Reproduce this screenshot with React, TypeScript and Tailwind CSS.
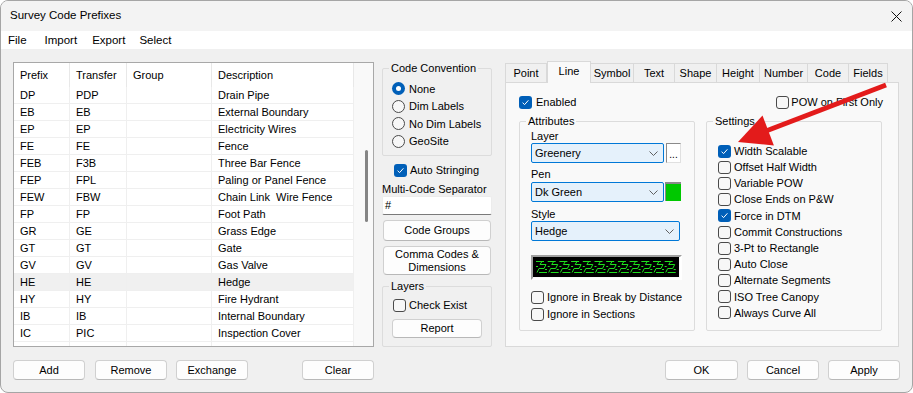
import React from "react";

type P = { children?: React.ReactNode; className?: string };

function Check({ checked }: { checked?: boolean }) {
  return checked ? (
    <span className="w-[13px] h-[13px] rounded-[3px] bg-[#005fb8] flex items-center justify-center shrink-0">
      <svg width="9" height="9" viewBox="0 0 9 9">
        <path d="M1.6 4.7 L3.6 6.6 L7.4 2.3" stroke="#ffffff" strokeWidth="1" fill="none" />
      </svg>
    </span>
  ) : (
    <span className="w-[13px] h-[13px] rounded-[3px] border border-[#4a4a4a] bg-[#f7f7f7] shrink-0" />
  );
}

function Radio({ checked }: { checked?: boolean }) {
  return checked ? (
    <span className="w-[13px] h-[13px] rounded-full bg-[#005fb8] flex items-center justify-center shrink-0">
      <span className="w-[5px] h-[5px] rounded-full bg-white" />
    </span>
  ) : (
    <span className="w-[13px] h-[13px] rounded-full border border-[#4a4a4a] bg-[#f7f7f7] shrink-0" />
  );
}

function Btn({ children, className = "" }: P) {
  return (
    <div
      className={`flex items-center justify-center bg-[#fdfdfd] border border-[#d0d0d0] border-b-[#b8b8b8] rounded-[4px] text-[11px] text-black leading-[13px] text-center ${className}`}
    >
      {children}
    </div>
  );
}

function Group({ label, className = "", bg, children }: P & { label: string; bg: string }) {
  return (
    <div className={`relative border border-[#dcdcdc] rounded-[2px] ${className}`}>
      <span className={`absolute -top-[8px] left-[6px] px-[2px] leading-[14px] text-[11px] ${bg}`}>{label}</span>
      {children}
    </div>
  );
}

function Select({ value, className = "" }: { value: string; className?: string }) {
  return (
    <div
      className={`h-[20px] flex items-center justify-between bg-[#e5f1fb] border border-[#0078d7] rounded-[2px] pl-[3px] pr-[5px] ${className}`}
    >
      <span className="text-[11px]">{value}</span>
      <svg width="9" height="5" viewBox="0 0 9 5">
        <path d="M0.5 0.5 L4.5 4.5 L8.5 0.5" stroke="#606060" strokeWidth="1" fill="none" />
      </svg>
    </div>
  );
}

const rows: [string, string, string][] = [
  ["DP", "PDP", "Drain Pipe"],
  ["EB", "EB", "External Boundary"],
  ["EP", "EP", "Electricity Wires"],
  ["FE", "FE", "Fence"],
  ["FEB", "F3B", "Three Bar Fence"],
  ["FEP", "FPL", "Paling or Panel Fence"],
  ["FEW", "FBW", "Chain Link\u00a0 Wire Fence"],
  ["FP", "FP", "Foot Path"],
  ["GR", "GE", "Grass Edge"],
  ["GT", "GT", "Gate"],
  ["GV", "GV", "Gas Valve"],
  ["HE", "HE", "Hedge"],
  ["HY", "HY", "Fire Hydrant"],
  ["IB", "IB", "Internal Boundary"],
  ["IC", "PIC", "Inspection Cover"],
  ["KB", "KB", "Kerb (TC) Channel"],
];

const tabs: [string, number][] = [
  ["Point", 42],
  ["Line", 44],
  ["Symbol", 44],
  ["Text", 42],
  ["Shape", 43],
  ["Height", 44],
  ["Number", 49],
  ["Code", 42],
  ["Fields", 40],
];

const settings: [string, boolean][] = [
  ["Width Scalable", true],
  ["Offset Half Width", false],
  ["Variable POW", false],
  ["Close Ends on P&W", false],
  ["Force in DTM", true],
  ["Commit Constructions", false],
  ["3-Pt to Rectangle", false],
  ["Auto Close", false],
  ["Alternate Segments", false],
  ["ISO Tree Canopy", false],
  ["Always Curve All", false],
];

function Hedge() {
  const units = [];
  for (let i = 0; i < 12; i++) {
    const x = 3 + i * 11.7;
    units.push(
      <g key={i} transform={`translate(${x},0)`}>
        <path d="M0 4.5 H8 M3 15.5 H11" />
        <path d="M1 15.5 L3 11.5 H8 L10 7.5 H4 L6 4.5" />
        <path d="M0 9.5 H2 M9 12.5 H11" />
      </g>
    );
  }
  return (
    <svg width="146" height="20" viewBox="0 0 146 20">
      <rect width="146" height="20" fill="#000" />
      <g stroke="#1ee01e" strokeWidth="1" fill="none">{units}</g>
    </svg>
  );
}

export default function App() {
  return (
    <div className="w-[913px] h-[393px] relative overflow-hidden bg-[#f0f0f0] border border-[#a5a5a5] rounded-[8px] font-['Liberation_Sans',Arial,sans-serif] text-black text-[11px] flex flex-col">
      {/* Title bar */}
      <div className="h-[30px] shrink-0 bg-[#f3f3f3] flex items-center pl-[9px] pr-[10px]">
        <span className="text-[11.5px]">Survey Code Prefixes</span>
        <div className="ml-auto flex items-center">
          <svg width="11" height="11" viewBox="0 0 11 11">
            <path d="M0.5 0.5 L10.5 10.5 M10.5 0.5 L0.5 10.5" stroke="#111" strokeWidth="1" />
          </svg>
        </div>
      </div>
      {/* Menu */}
      <div className="h-[18px] shrink-0 bg-white flex items-center pl-[7px] pt-[1px] text-[11.5px]">
        <span>File</span>
        <span className="ml-[18px]">Import</span>
        <span className="ml-[15px]">Export</span>
        <span className="ml-[14px]">Select</span>
      </div>

      {/* Body */}
      <div className="flex flex-col pt-[12px]">
        <div className="h-[287px] flex items-start pl-[12px]">
          {/* Table */}
          <div className="mt-[1px] w-[361px] h-[285px] border border-[#a8a8a8] bg-white flex overflow-hidden">
            <div className="w-[340px] flex flex-col">
              <div className="h-[24px] flex shrink-0">
                <div className="w-[56px] border-r border-[#e8e8e8] pl-[6px] flex items-center">Prefix</div>
                <div className="w-[57px] border-r border-[#e8e8e8] pl-[6px] flex items-center">Transfer</div>
                <div className="w-[85px] border-r border-[#e8e8e8] pl-[6px] flex items-center">Group</div>
                <div className="w-[142px] border-r border-[#e8e8e8] pl-[6px] flex items-center">Description</div>
              </div>
              {rows.map(([a, b, c]) => (
                <div
                  key={a}
                  className={`h-[17px] shrink-0 flex border-b border-[#efefef] ${a === "HE" ? "bg-[#f0f0f0]" : ""}`}
                >
                  <div className="w-[56px] border-r border-[#efefef] pl-[6px] flex items-center">{a}</div>
                  <div className="w-[57px] border-r border-[#efefef] pl-[6px] flex items-center">{b}</div>
                  <div className="w-[85px] border-r border-[#efefef] pl-[6px] flex items-center"></div>
                  <div className="w-[142px] border-r border-[#efefef] pl-[6px] flex items-center whitespace-pre">{c}</div>
                </div>
              ))}
            </div>
            <div className="w-[19px] bg-[#f9f9f9] flex flex-col items-center pt-[87px] pl-[5px]">
              <div className="w-[3px] h-[72px] rounded-full bg-[#858585]" />
            </div>
          </div>

          {/* Middle column */}
          <div className="ml-[8px] w-[110px] flex flex-col">
            <Group label="Code Convention" bg="bg-[#f0f0f0]" className="mt-[7px] h-[88px] pt-[11px] pl-[9px]">
              {[["None", true], ["Dim Labels", false], ["No Dim Labels", false], ["GeoSite", false]].map(
                ([t, c]) => (
                  <div key={t as string} className="h-[17.5px] flex items-center gap-[4px]">
                    <Radio checked={c as boolean} />
                    <span>{t as string}</span>
                  </div>
                )
              )}
            </Group>
            <div className="mt-[6px] h-[17px] flex items-center gap-[3px] pl-[12px]">
              <Check checked />
              <span>Auto Stringing</span>
            </div>
            <div className="mt-[3px] h-[14px] flex items-center">Multi-Code Separator</div>
            <div className="h-[19px] bg-white border border-[#ececec] border-b-[#7a7a7a] rounded-[2px] flex items-center pl-[2px]">
              #
            </div>
            <Btn className="mt-[5px] mx-[1px] h-[21px]">Code Groups</Btn>
            <Btn className="mt-[5px] mx-[1px] h-[29px]">
              Comma Codes &amp;
              <br />
              Dimensions
            </Btn>
            <Group label="Layers" bg="bg-[#f0f0f0]" className="mt-[11px] h-[61px] pt-[10px] pl-[10px]">
              <div className="h-[16px] flex items-center gap-[3px]">
                <Check />
                <span>Check Exist</span>
              </div>
              <Btn className="mt-[6px] ml-[-1px] w-[90px] h-[19px]">Report</Btn>
            </Group>
          </div>

          {/* Right tab control */}
          <div className="ml-[13px] w-[394px] flex flex-col">
            <div className="h-[21px] flex items-end">
              {tabs.map(([t, w]) =>
                t === "Line" ? (
                  <div
                    key={t}
                    style={{ width: w }}
                    className="h-[22px] -mb-[1px] relative z-10 bg-[#f9f9f9] border border-b-0 border-[#d9d9d9] flex items-center justify-center pb-[2px]"
                  >
                    {t}
                  </div>
                ) : (
                  <div
                    key={t}
                    style={{ width: w }}
                    className="h-[19px] bg-[#f0f0f0] border border-b-0 border-[#d9d9d9] -ml-px first:ml-0 flex items-center justify-center"
                  >
                    {t}
                  </div>
                )
              )}
            </div>
            <div className="h-[265px] bg-[#f9f9f9] border border-[#d9d9d9] flex flex-col pl-[13px]">
              <div className="mt-[11px] h-[16px] flex items-center">
                <Check checked />
                <span className="ml-[4px]">Enabled</span>
                <div className="ml-auto mr-[15px] flex items-center gap-[2px]">
                  <Check />
                  <span>POW on First Only</span>
                </div>
              </div>
              <div className="mt-[11px] flex gap-[11px]">
                <Group label="Attributes" bg="bg-[#f9f9f9]" className="w-[176px] h-[210px] pt-[7px] pl-[11px] flex flex-col">
                  <div className="h-[14px] flex items-center">Layer</div>
                  <div className="flex gap-[2px]">
                    <Select value="Greenery" className="w-[133px]" />
                    <div className="w-[15px] h-[20px] bg-white border border-[#8a8a8a] border-r-[#e0e0e0] border-b-[#e0e0e0] flex items-end justify-center text-[10px] leading-[14px]">
                      ...
                    </div>
                  </div>
                  <div className="mt-[4px] h-[14px] flex items-center">Pen</div>
                  <div className="mt-[1px] flex gap-[1px]">
                    <Select value="Dk Green" className="w-[133px]" />
                    <div className="w-[16px] h-[19px] bg-[#00c800] border-t-[2px] border-l border-[#8a8a8a]" />
                  </div>
                  <div className="mt-[5px] h-[14px] flex items-center">Style</div>
                  <Select value="Hedge" className="w-[149px]" />
                  <div className="mt-[14px] w-[151px] h-[25px] border-2 border-t-[#a0a0a0] border-l-[#a0a0a0] border-r-white border-b-white flex">
                    <Hedge />
                  </div>
                  <div className="mt-[9px] h-[16px] flex items-center gap-[3px]">
                    <Check />
                    <span>Ignore in Break by Distance</span>
                  </div>
                  <div className="mt-[1px] h-[16px] flex items-center gap-[3px]">
                    <Check />
                    <span>Ignore in Sections</span>
                  </div>
                </Group>
                <Group label="Settings" bg="bg-[#f9f9f9]" className="w-[176px] h-[210px] pt-[21px] pl-[11px]">
                  {settings.map(([t, c]) => (
                    <div key={t} className="h-[16.2px] flex items-center gap-[3px]">
                      <Check checked={c} />
                      <span>{t}</span>
                    </div>
                  ))}
                </Group>
              </div>
            </div>
          </div>
        </div>

        {/* Footer buttons */}
        <div className="mt-[12px] h-[20px] flex pl-[12px] pr-[12px]">
          <Btn className="w-[72px] h-[20px]">Add</Btn>
          <Btn className="ml-[10px] w-[72px] h-[20px]">Remove</Btn>
          <Btn className="ml-[9px] w-[72px] h-[20px]">Exchange</Btn>
          <Btn className="ml-[54px] w-[72px] h-[20px]">Clear</Btn>
          <Btn className="ml-auto w-[73px] h-[20px] border-[#0067c0] border-b-[#0067c0]">OK</Btn>
          <Btn className="ml-[9px] w-[72px] h-[20px]">Cancel</Btn>
          <Btn className="ml-[9px] w-[72px] h-[20px]">Apply</Btn>
        </div>
      </div>

      {/* Red annotation arrow */}
      <svg className="absolute left-0 top-0 pointer-events-none" width="913" height="393" viewBox="0 0 913 393">
        <line x1="885" y1="84" x2="765" y2="130" stroke="#e31b1b" strokeWidth="5" />
        <polygon points="737,141 761.5,114.6 772.9,144.4" fill="#e31b1b" />
      </svg>
    </div>
  );
}
